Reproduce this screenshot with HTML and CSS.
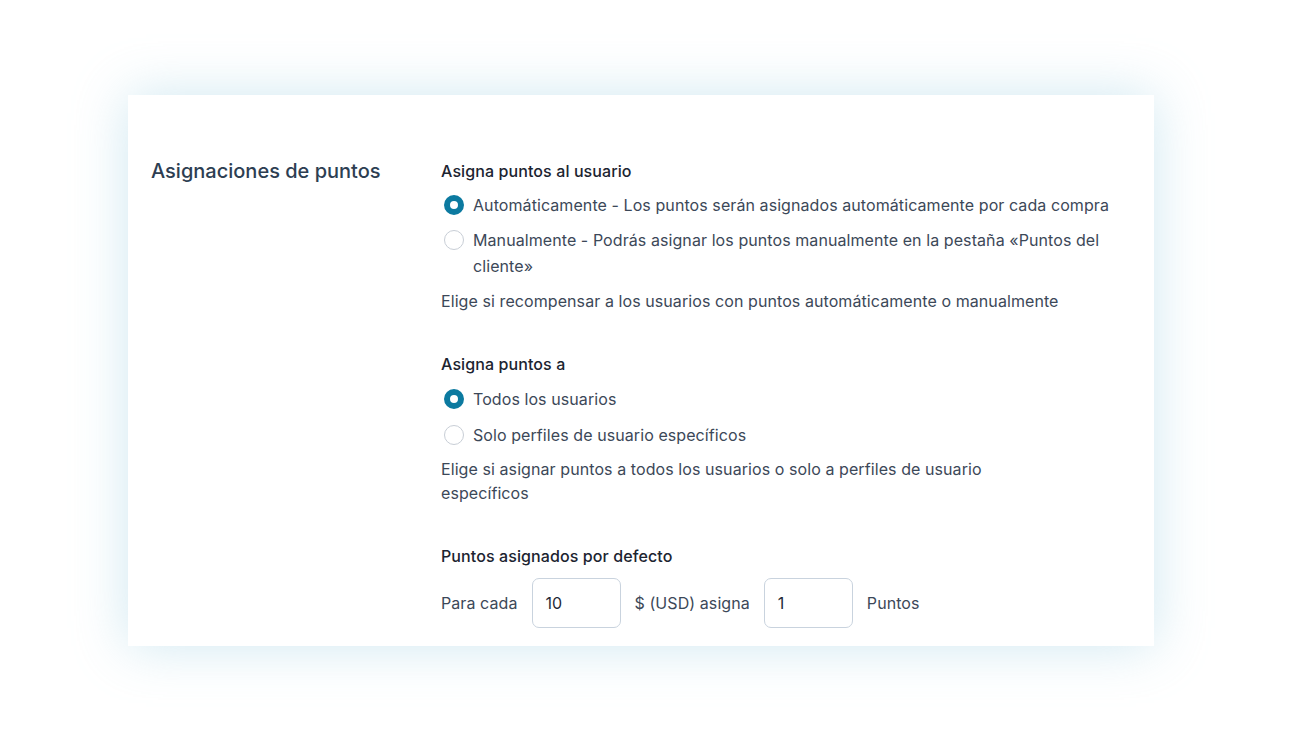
FILE: index.html
```html
<!DOCTYPE html>
<html lang="es">
<head>
<meta charset="utf-8">
<title>Asignaciones de puntos</title>
<link rel="stylesheet" href="styles.css">
</head>
<body>
<div class="page">
  <section class="card">
    <h2 class="section-title">Asignaciones de puntos</h2>
    <div class="fields">
      <div class="field field-first">
        <h3 class="field-label">Asigna puntos al usuario</h3>
        <div class="options">
          <label class="option"><span class="radio checked"></span><span class="option-text">Automáticamente - Los puntos serán asignados automáticamente por cada compra</span></label>
          <label class="option"><span class="radio"></span><span class="option-text">Manualmente - Podrás asignar los puntos manualmente en la pestaña «Puntos del cliente»</span></label>
        </div>
        <p class="desc">Elige si recompensar a los usuarios con puntos automáticamente o manualmente</p>
      </div>
      <div class="field">
        <h3 class="field-label">Asigna puntos a</h3>
        <div class="options">
          <label class="option"><span class="radio checked"></span><span class="option-text">Todos los usuarios</span></label>
          <label class="option"><span class="radio"></span><span class="option-text">Solo perfiles de usuario específicos</span></label>
        </div>
        <p class="desc">Elige si asignar puntos a todos los usuarios o solo a perfiles de usuario específicos</p>
      </div>
      <div class="field">
        <h3 class="field-label">Puntos asignados por defecto</h3>
        <div class="inline-row">
          <span class="inline-text">Para cada</span>
          <span class="input">10</span>
          <span class="inline-text">$ (USD) asigna</span>
          <span class="input">1</span>
          <span class="inline-text">Puntos</span>
        </div>
      </div>
    </div>
  </section>
</div>
</body>
</html>
```

FILE: styles.css
```css
* { box-sizing: border-box; }
html, body { margin: 0; padding: 0; background: #ffffff; }
body {
  font-family: Inter, "Noto Sans", "Liberation Sans", sans-serif;
  color: #3c4858;
  width: 1300px;
  height: 741px;
  overflow: hidden;
}
.page {
  padding: 95px 0 0 128px;
}
.card {
  width: 1026px;
  height: 551px;
  background: #ffffff;
  box-shadow: 0 0 50px rgba(150, 205, 225, 0.45);
  display: grid;
  grid-template-columns: 290px 1fr;
  padding: 64px 24px 18px 23px;
}
.section-title {
  margin: 0;
  font-size: 20px;
  line-height: 24px;
  font-weight: 500;
  color: #2d3e52;
}
.field { margin-bottom: 39px; }
.field:last-child { margin-bottom: 0; }
.field-label {
  margin: 0;
  font-size: 16px;
  line-height: 24px;
  font-weight: 500;
  color: #1c2430;
  letter-spacing: 0.1px;
}
.options {
  display: flex;
  flex-direction: column;
  gap: 10px;
  margin-top: 10px;
}
.field-first .options {
  gap: 9px;
  margin-top: 9px;
}
.field-first .desc { margin-top: 10px; }
.option {
  display: flex;
  align-items: flex-start;
  font-size: 16px;
  line-height: 26px;
  color: #3c4858;
  letter-spacing: 0.08px;
}
.radio {
  flex: none;
  width: 20px;
  height: 20px;
  margin: 3px 9px 0 3px;
  border-radius: 50%;
  border: 1.5px solid #c8ced6;
  background: #fff;
}
.radio.checked {
  border: 6px solid #0c7aa0;
  background: #fff;
}
.desc {
  margin: 9px 0 0;
  font-size: 16px;
  line-height: 24px;
  color: #3c4858;
  max-width: 620px;
  letter-spacing: 0.08px;
}
.inline-row {
  display: flex;
  align-items: center;
  margin-top: 10px;
  font-size: 16px;
  letter-spacing: 0.08px;
}
.inline-text { color: #3c4858; }
.input {
  width: 89px;
  height: 50px;
  border: 1.5px solid #c9d3de;
  border-radius: 7px;
  padding-left: 13px;
  display: flex;
  align-items: center;
  color: #1f2a37;
  margin: 0 14px;
}
```
